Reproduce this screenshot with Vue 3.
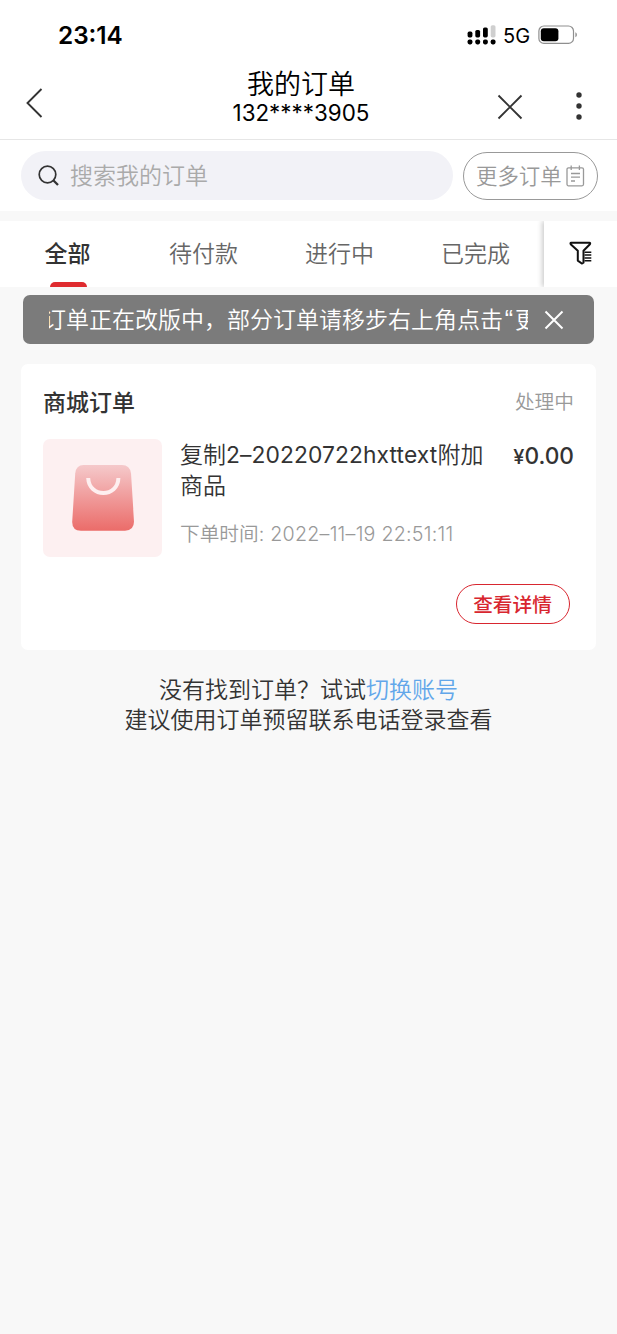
<script setup>
const tabs = ['待付款', '进行中', '已完成']
</script>

<template>
  <main class="page">
    <header class="header">
      <div class="status">
        <span class="clock">23:14</span>
        <div class="signals">
          <svg class="signal" width="30" height="20" viewBox="0 0 30 20">
            <g fill="#000">
              <rect x="0.6" y="6.6" width="4.8" height="5.8" rx="1.6" />
              <rect x="8.3" y="5" width="4.8" height="7.4" rx="1.6" />
              <rect x="16" y="2.4" width="4.8" height="10" rx="1.6" />
              <rect x="0.6" y="14.4" width="4.800" height="5" rx="1.8" />
              <rect x="8.3" y="14.4" width="4.800" height="5" rx="1.8" />
              <rect x="16" y="14.4" width="4.800" height="5" rx="1.8" />
              <rect x="23.7" y="14.4" width="4.800" height="5" rx="1.8" />
            </g>
            <rect x="23.7" y="0.2" width="4.8" height="12.2" rx="1.6" fill="#cfcfcf" />
          </svg>
          <span class="network">5G</span>
          <svg class="battery" width="40" height="20" viewBox="0 0 40 20">
            <rect x="0.9" y="1" width="34.6" height="17.4" rx="5" fill="#fff" stroke="#8f8f8f" stroke-width="1.2" />
            <rect x="2.8" y="3.2" width="17.6" height="13" rx="3" fill="#000" />
            <path d="M37.4 7.2c2 .8 2 4.200 0 5z" fill="#8f8f8f" />
          </svg>
        </div>
      </div>
      <nav class="navbar">
        <svg class="back" width="17" height="30" viewBox="0 0 17 30">
          <path d="M15.500 1 L1.500 15 L15.500 29" fill="none" stroke="#333" stroke-width="1.9" />
        </svg>
        <div class="heading">
          <h1>我的订单</h1>
          <p>132****3905</p>
        </div>
        <div class="actions">
          <svg class="close" width="26" height="26" viewBox="0 0 26 26">
            <path d="M1.500 1.500 L24.500 24.500 M24.500 1.500 L1.500 24.500" fill="none" stroke="#333" stroke-width="1.9" />
          </svg>
          <svg width="6" height="30" viewBox="0 0 6 30" fill="#333">
            <circle cx="3" cy="4" r="2.7" /><circle cx="3" cy="15" r="2.700" /><circle cx="3" cy="26" r="2.700" />
          </svg>
        </div>
      </nav>
    </header>

    <section class="search-row">
      <div class="search">
        <svg width="22" height="22" viewBox="0 0 22 22" fill="none" stroke="#333">
          <circle cx="9.500" cy="9.500" r="8.300" stroke-width="1.7" />
          <path d="M15.500 15.500 L20 20" stroke-width="2.300" />
        </svg>
        <span>搜索我的订单</span>
      </div>
      <button class="more">
        <span>更多订单</span>
        <svg width="19" height="22" viewBox="0 0 19 22" fill="none" stroke="#999" stroke-width="1.3">
          <rect x="1" y="2.800" width="16.500" height="18" rx="1.500" />
          <path d="M5.200 0.500v4.500 M13.400 0.500v4.500 M5 8.500h9 M5 12.200h9 M5 16h4" />
        </svg>
      </button>
    </section>

    <section class="tabs">
      <div class="tab active">全部</div>
      <div v-for="tab in tabs" :key="tab" class="tab">{{ tab }}</div>
      <div class="filter">
        <svg width="24" height="24" viewBox="0 0 24 24" fill="none" stroke="#111" stroke-linejoin="round">
          <path d="M2.200 1.800H20.400Q21.600 1.900 20.900 3.200L14.500 9.800V21.700L12.800 22.500L8.800 19.600V9.800L1.700 3.200Q1.100 1.900 2.200 1.800Z" stroke-width="2" />
          <path d="M15.500 11.200h6.800 M15.500 14.100h6.800 M15.500 17h6.800 M15.500 19.700h6.800" stroke-width="1.500" />
        </svg>
      </div>
    </section>

    <section class="notice">
      <div class="ticker"><span>订单正在改版中，部分订单请移步右上角点击<i>“</i>更多订单</span></div>
      <svg width="20" height="20" viewBox="0 0 20 20">
        <path d="M1.500 1.500 L18.500 18.500 M18.500 1.500 L1.500 18.500" fill="none" stroke="#fff" stroke-width="2" />
      </svg>
    </section>

    <article class="card">
      <div class="card-head">
        <h2>商城订单</h2>
        <span>处理中</span>
      </div>
      <div class="product">
        <div class="thumb">
          <svg width="64" height="68" viewBox="0 0 64 68">
            <defs>
              <linearGradient id="bag" x1="0" y1="0" x2="0" y2="1">
                <stop offset="0" stop-color="#f5c9cb" />
                <stop offset="1" stop-color="#eb6c69" />
              </linearGradient>
            </defs>
            <path d="M12.500 1H51Q59 1 60 9.500L63 57.500Q63 66.500 54 66.700H10Q1 66.500 1.200 57.500L4.200 9.500Q5 1 12.500 1Z" fill="url(#bag)" />
            <path d="M17.200 14C18 34 46.800 34 47.400 14" fill="none" stroke="#feeff0" stroke-width="4" />
          </svg>
        </div>
        <div class="info">
          <p class="name">复制<span>2–20220722hxttext</span>附加<br>商品</p>
          <p class="time">下单时间<span>: 2022–11–19 22:51:11</span></p>
        </div>
        <span class="price">¥<b>0.00</b></span>
      </div>
      <button class="detail">查看详情</button>
    </article>

    <footer class="tip">
      <p>没有找到订单？试试<a>切换账号</a></p>
      <p>建议使用订单预留联系电话登录查看</p>
    </footer>
  </main>
</template>

<style>
html, body { background: #f8f8f8; }
body { overflow: hidden; }
</style>

<style scoped>
* { box-sizing: border-box; }
.page {
  width: 617px;
  height: 1334px;
  background: #f8f8f8;
  font-family: Inter, "Noto Sans CJK SC", sans-serif;
  font-weight: 350;
  color: #333;
}
h1, h2, p { margin: 0; font-weight: inherit; }
svg { display: block; flex: none; }
button { padding: 0; margin: 0; background: #fff; font: inherit; }
.header { height: 140px; background: #fff; border-bottom: 1px solid #e6e6e6; }
.status { display: flex; justify-content: space-between; height: 68px; padding: 19px 39px 0 58px; color: #000; }
.clock { font-size: 24.300px; line-height: 33px; font-weight: 600; }
.signals { display: flex; align-items: flex-start; }
.signal { margin: 6px 6px 0 0; }
.network { width: 35px; font-size: 20px; line-height: 34px; font-weight: 400; }
.battery { margin-top: 6px; }
.navbar { display: grid; grid-template-columns: 178px 1fr 178px; height: 71px; padding: 0 35px 0 26px; color: #000; }
.back { margin-top: 20px; }
.heading { padding-right: 6px; padding-top: 2px; text-align: center; }
.heading h1 { font-size: 27px; line-height: 29px; white-space: nowrap; }
.heading p { font-size: 22.400px; line-height: 28px; font-weight: 400; }
.actions { display: flex; justify-content: flex-end; gap: 53px; padding-top: 23px; }
.close { margin-top: 3px; }
.search-row { display: flex; gap: 10px; height: 71px; padding: 11px 18px 0 21px; background: #fff; }
.search { display: flex; align-items: center; gap: 10px; flex: none; width: 432px; height: 49px; padding-left: 17px; border-radius: 25px; background: #f2f2f7; color: #aaa; font-size: 23px; }
.search span, .more span { margin-top: -3px; }
.more { display: flex; align-items: center; gap: 4px; width: 135px; height: 48px; margin-top: 1px; padding-left: 12px; border: 1px solid #999; border-radius: 24px; color: #999; font-size: 21.400px; white-space: nowrap; }
.tabs { display: flex; height: 66px; margin-top: 10px; background: #fff; overflow: hidden; }
.tab { position: relative; flex: none; width: 136px; padding-right: 1px; text-align: center; line-height: 67px; font-size: 23px; color: #666; }
.active { color: #333; font-weight: 500; }
.active::after { content: ""; position: absolute; left: 50px; bottom: 0; width: 37px; height: 5px; border-radius: 5px 5px 0 0; background: #df2b2f; }
.filter { position: relative; flex: 1; padding: 20px 0 0 25px; background: #fff; box-shadow: -2px 0 5px rgba(0, 0, 0, .2); }
.notice { display: flex; align-items: center; justify-content: space-between; height: 49px; margin: 8px 23px 0; padding: 0 30px 0 26px; border-radius: 7px; background: #7b7b7b; color: #fff; }
.ticker { display: flex; width: 479px; margin-top: -3px; overflow: hidden; }
.ticker span { flex: none; margin-left: -6px; white-space: nowrap; font-size: 23px; }
.ticker i { display: inline-block; width: 12px; text-align: center; font-style: normal; font-family: "Liberation Sans", sans-serif; font-size: 25px; line-height: 1; }
.card { height: 286px; margin: 20px 21px 0; padding: 22px 22px 0; border-radius: 7px; background: #fff; }
.card-head { display: flex; justify-content: space-between; height: 53px; line-height: 33px; }
.card-head h2 { font-size: 23px; line-height: 34px; font-weight: 500; }
.card-head span { font-size: 19.700px; color: #999; }
.product { display: flex; height: 118px; }
.thumb { display: flex; align-items: center; justify-content: center; width: 119px; height: 118px; border-radius: 7px; background: #fdf0f1; }
.info { flex: 1; padding-left: 18px; white-space: nowrap; }
.name { font-size: 23px; line-height: 31px; }
.name span { font-size: 22.800px; font-weight: 400; letter-spacing: .1px; }
.time { margin-top: 18px; font-size: 19.700px; line-height: 28px; color: #999; }
.time span { letter-spacing: .22px; }
.price { font-size: 20px; line-height: 33px; font-weight: 450; }
.price b { font-size: 22.700px; font-weight: 450; }
.detail { display: block; width: 114px; height: 40px; margin: 27px 4px 0 auto; padding: 0 1px 1px 0; border: 1px solid #d8262f; border-radius: 20px; color: #d8262f; font-size: 19.700px; font-weight: 500; }
.tip { padding-top: 25px; text-align: center; font-size: 23px; line-height: 30px; }
.tip a { color: #62a7ea; }
</style>
